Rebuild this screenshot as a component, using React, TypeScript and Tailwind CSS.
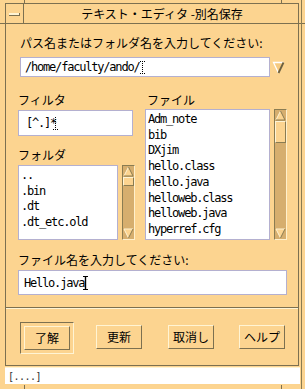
const jp = "font-['Noto_Sans_CJK_JP',sans-serif]";
const mono = "font-['DejaVu_Sans_Mono','Noto_Sans_CJK_JP',monospace] text-[12px] tracking-[-1.2px]";

function Arrow({ up }: { up: boolean }) {
  return (
    <svg width="11" height="11" viewBox="0 0 11 11" className="block">
      {up ? (
        <>
          <polygon points="5.5,1 10,10 1,10" fill="#fcd490" />
          <polyline points="1,10 5.5,1" fill="none" stroke="#fff4d4" strokeWidth="1" />
          <polyline points="5.5,1 10,10 1,10" fill="none" stroke="#8a7c52" strokeWidth="1" />
        </>
      ) : (
        <>
          <polygon points="1,1 10,1 5.5,10" fill="#fcd490" />
          <polyline points="5.5,10 1,1 10,1" fill="none" stroke="#fff4d4" strokeWidth="1" />
          <polyline points="10,1 5.5,10" fill="none" stroke="#8a7c52" strokeWidth="1" />
        </>
      )}
    </svg>
  );
}

function ScrollBar({ h, thumb }: { h: string; thumb: string }) {
  return (
    <div className={`${h} w-[13px] flex flex-col bg-[#d6ae6e] border-t border-l border-[#8a7c52] border-r border-r-[#fff0cc] border-b border-b-[#fff0cc]`}>
      <Arrow up />
      <div className={`${thumb} bg-[#fcd490] border-t border-l border-[#fff4d4] border-r border-r-[#8a7c52] border-b border-b-[#8a7c52]`} />
      <div className="flex-1" />
      <Arrow up={false} />
    </div>
  );
}

function Btn({ label, def }: { label: string; def?: boolean }) {
  const b = (
    <div className={`w-[46px] h-[24px] flex items-center justify-center text-[12px] text-black ${jp} border-t border-l border-[#fff4d4] border-r border-b border-r-[#7c7050] border-b-[#7c7050]`}>
      {label}
    </div>
  );
  if (!def) return <div className="mt-[3px]">{b}</div>;
  return (
    <div className="p-[3px] border-t border-l border-[#7c7050] border-r border-b border-r-[#fff4d4] border-b-[#fff4d4]">
      {b}
    </div>
  );
}

const files = ["Adm_note", "bib", "DXjim", "hello.class", "hello.java", "helloweb.class", "helloweb.java", "hyperref.cfg"];
const folders = ["..", ".bin", ".dt", ".dt_etc.old"];

export default function App() {
  return (
    <div className="relative w-[305px] h-[389px] overflow-hidden bg-[#fcd490] text-black">
      {/* resize corner marks */}
      <div className="absolute left-[24px] top-0 w-px h-[4px] bg-[#7c7050]" />
      <div className="absolute left-[281px] top-0 w-px h-[4px] bg-[#7c7050]" />
      <div className="absolute left-0 top-[23px] w-[5px] h-px bg-[#7c7050]" />
      <div className="absolute right-0 top-[23px] w-[7px] h-px bg-[#7c7050]" />
      <div className="absolute left-[24px] bottom-0 w-px h-[4px] bg-[#7c7050]" />
      <div className="absolute left-[281px] bottom-0 w-px h-[4px] bg-[#7c7050]" />
      <div className="absolute right-[3px] top-0 w-px h-full bg-[#8a7c52]" />

      <div className="ml-[5px] pt-[3px]">
        <div className="w-[294px] h-[363px] flex flex-col border border-[#7c7050]">
          {/* title bar */}
          <div className="h-[20px] flex border-b border-[#7c7050]">
            <div className="w-[18px] border-r border-[#7c7050] flex items-center justify-center">
              <div className="w-[11px] h-[3px] mt-[2px] bg-[#fff4d4] border-b border-r border-[#7c7050]" />
            </div>
            <div className={`flex-1 flex items-center justify-center text-[12px] ${jp} pl-[2px] pt-[1px]`}>
              テキスト・エディタ -別名保存
            </div>
          </div>

          {/* body */}
          <div className="flex-1 flex flex-col pl-[12px]">
            <div className={`mt-[12px] ml-[2px] text-[12px] leading-[14px] ${jp}`}>
              パス名またはフォルダ名を入力してください:
            </div>
            <div className="mt-[7px] ml-[2px] flex">
              <div className={`w-[250px] h-[20px] bg-white border border-[#b4b0d0] flex items-center pl-[4px] ${mono}`}>
                /home/faculty/ando/
                <svg width="5" height="13" viewBox="0 0 5 13" className="ml-[1px]">
                  <line x1="2.5" y1="0" x2="2.5" y2="13" stroke="#000" strokeDasharray="1 1" />
                  <line x1="0" y1="0.5" x2="5" y2="0.5" stroke="#000" strokeDasharray="1 1" />
                  <line x1="0" y1="12.5" x2="5" y2="12.5" stroke="#000" strokeDasharray="1 1" />
                </svg>
              </div>
              <svg width="14" height="20" viewBox="0 0 14 20" className="ml-[2px] block">
                <polygon points="1.5,5.5 11.5,5.5 6.5,16" fill="#f6ca80" />
                <polyline points="6.5,16 1.5,5.5 11.5,5.5" fill="none" stroke="#ffffff" strokeWidth="1.3" />
                <polyline points="11.5,5.5 6.5,16" fill="none" stroke="#6c6040" strokeWidth="1.8" />
              </svg>
            </div>

            <div className="mt-[16px] flex">
              <div className="w-[117px] flex flex-col">
                <div className={`text-[12px] leading-[14px] ${jp}`}>フィルタ</div>
                <div className={`mt-[3px] w-[115px] h-[26px] bg-white border border-[#b4b0d0] flex items-center pl-[7px] ${mono}`}>
                  [^.]*
                  <svg width="5" height="13" viewBox="0 0 5 13" className="-ml-[3px]">
                    <line x1="2.5" y1="0" x2="2.5" y2="13" stroke="#000" strokeDasharray="1 1" />
                    <line x1="0" y1="12.5" x2="5" y2="12.5" stroke="#000" strokeDasharray="1 1" />
                  </svg>
                </div>
                <div className={`mt-[12px] text-[12px] leading-[14px] ${jp}`}>フォルダ</div>
                <div className="mt-[3px] flex gap-[4px]">
                  <div className={`w-[100px] h-[75px] bg-white border border-[#b4b0d0] pl-[2px] pt-[2px] leading-[15.6px] ${mono}`}>
                    {folders.map((f) => (
                      <div key={f}>{f}</div>
                    ))}
                  </div>
                  <ScrollBar h="h-[75px]" thumb="h-[9px]" />
                </div>
              </div>

              <div className="ml-[10px] flex flex-col">
                <div className={`text-[12px] leading-[14px] ${jp} pl-[2px]`}>ファイル</div>
                <div className="mt-[2px] flex gap-[4px]">
                  <div className={`w-[125px] h-[131px] bg-white border border-[#b4b0d0] pl-[2px] pt-[2px] leading-[15.7px] ${mono}`}>
                    {files.map((f) => (
                      <div key={f}>{f}</div>
                    ))}
                  </div>
                  <ScrollBar h="h-[131px]" thumb="h-[22px]" />
                </div>
              </div>
            </div>

            <div className={`mt-[13px] text-[12px] leading-[14px] ${jp}`}>ファイル名を入力してください:</div>
            <div className={`mt-[3px] w-[269px] h-[25px] bg-white border border-[#b4b0d0] flex items-center pl-[5px] ${mono}`}>
              Hello.java
              <svg width="5" height="14" viewBox="0 0 5 14" className="-ml-[1px]">
                <line x1="2.5" y1="0" x2="2.5" y2="14" stroke="#000" strokeWidth="1.4" />
                <line x1="0" y1="0.5" x2="5" y2="0.5" stroke="#000" />
                <line x1="0" y1="13.5" x2="5" y2="13.5" stroke="#000" />
              </svg>
            </div>
          </div>

          <div className="mt-[12px] h-[2px] border-t border-[#7c7050] border-b border-b-[#fff4d4]" />

          <div className="mt-[13px] mb-[12px] ml-[14px] flex items-start">
            <Btn label="了解" def />
            <div className="ml-[22px]"><Btn label="更新" /></div>
            <div className="ml-[26px]"><Btn label="取消し" /></div>
            <div className="ml-[25px]"><Btn label="ヘルプ" /></div>
          </div>
        </div>

        <div className="mt-[1px] w-[295px] h-[17px] bg-white border-t border-[#fff4d4] flex items-center pl-[3px]">
          <span className="font-['DejaVu_Sans_Mono',monospace] text-[10px] text-[#333] tracking-[-0.5px]">[....]</span>
        </div>
      </div>
    </div>
  );
}
